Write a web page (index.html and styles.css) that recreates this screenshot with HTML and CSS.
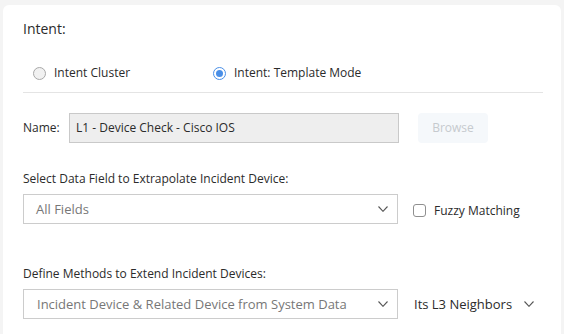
FILE: index.html
```
<!DOCTYPE html>
<html>
<head>
<meta charset="utf-8">
<link rel="stylesheet" href="styles.css">
</head>
<body>
<div class="card">
  <div class="title">Intent:</div>
  <div class="radios">
    <label class="radio-item first"><span class="radio"></span><span>Intent Cluster</span></label>
    <label class="radio-item"><span class="radio checked"></span><span>Intent: Template Mode</span></label>
  </div>
  <div class="divider"></div>
  <div class="name-row">
    <span class="name-label">Name:</span>
    <div class="name-input">L1 - Device Check - Cisco IOS</div>
    <div class="browse">Browse</div>
  </div>
  <div class="field-label first-label">Select Data Field to Extrapolate Incident Device:</div>
  <div class="select-row">
    <div class="select">
      <span class="select-text">All Fields</span>
      <svg class="chev" width="10" height="6" viewBox="0 0 10 6"><path d="M0.5 0.5 L5 5.3 L9.5 0.5" fill="none" stroke="#555" stroke-width="1.1"/></svg>
    </div>
    <label class="check-item"><span class="checkbox"></span><span>Fuzzy Matching</span></label>
  </div>
  <div class="field-label second-label">Define Methods to Extend Incident Devices:</div>
  <div class="select-row">
    <div class="select">
      <span class="select-text shifted">Incident Device &amp; Related Device from System Data</span>
      <svg class="chev" width="10" height="6" viewBox="0 0 10 6"><path d="M0.5 0.5 L5 5.3 L9.5 0.5" fill="none" stroke="#555" stroke-width="1.1"/></svg>
    </div>
    <div class="neighbors">
      <span>Its L3 Neighbors</span>
      <svg class="chev" width="10" height="6" viewBox="0 0 10 6"><path d="M0.5 0.5 L5 5.3 L9.5 0.5" fill="none" stroke="#555" stroke-width="1.1"/></svg>
    </div>
  </div>
</div>
</body>
</html>
```
FILE: styles.css
```
html, body {
  margin: 0;
  padding: 0;
  background: #f4f4f4;
  height: 334px;
  overflow: hidden;
}
body {
  font-family: "Open Sans", "Liberation Sans", sans-serif;
  color: #2b2b2b;
  font-size: 12px;
}
.card {
  margin: 5px 0 0 3px;
  width: 558px;
  height: 340px;
  box-sizing: border-box;
  background: #fff;
  border-radius: 6px;
  padding: 14px 18px 0 20px;
}
.title {
  font-size: 14px;
  line-height: 20px;
  height: 20px;
}
.radios {
  display: flex;
  align-items: center;
  height: 20px;
  margin-top: 24px;
  padding-left: 10px;
  line-height: 20px;
}
.radio-item {
  display: flex;
  align-items: center;
  gap: 8px;
}
.radio-item.first {
  width: 180px;
}
.radio {
  width: 13px;
  height: 13px;
  box-sizing: border-box;
  border-radius: 50%;
  border: 1px solid #a8a8a8;
  background: #f1f1f1;
}
.radio.checked {
  border: 1px solid #4a8fe7;
  background: #fff;
  position: relative;
}
.radio.checked::after {
  content: "";
  position: absolute;
  left: 2px;
  top: 2px;
  width: 7px;
  height: 7px;
  border-radius: 50%;
  background: #4a8fe7;
}
.divider {
  height: 1px;
  background: #e4e4e4;
  margin-top: 9px;
}
.name-row {
  display: flex;
  align-items: center;
  height: 30px;
  margin-top: 20px;
}
.name-label {
  width: 46px;
  line-height: 16px;
}
.name-input {
  width: 330px;
  height: 30px;
  box-sizing: border-box;
  background: #eeeeee;
  border: 1px solid #c9c9c9;
  padding: 0 6px;
  line-height: 28px;
}
.browse {
  margin-left: 19px;
  width: 70px;
  height: 30px;
  border-radius: 4px;
  background: #f5f8fb;
  color: #c6cace;
  text-align: center;
  line-height: 30px;
  font-size: 12px;
}
.field-label {
  line-height: 16px;
  height: 16px;
}
.first-label {
  margin-top: 28px;
}
.second-label {
  margin-top: 42px;
}
.select-row {
  display: flex;
  align-items: center;
  margin-top: 7px;
  height: 30px;
}
.select {
  width: 375px;
  height: 30px;
  box-sizing: border-box;
  border: 1px solid #cccccc;
  display: flex;
  align-items: center;
  justify-content: space-between;
  padding: 0 9px 0 12px;
  color: #777;
  font-size: 13px;
}
.select-text.shifted {
  margin-left: 1px;
}
.chev {
  display: block;
}
.check-item {
  display: flex;
  align-items: center;
  gap: 8px;
  margin-left: 15px;
  margin-top: 3px;
}
.checkbox {
  width: 13px;
  height: 13px;
  box-sizing: border-box;
  border: 1px solid #8f8f8f;
  border-radius: 3px;
  background: #fff;
}
.neighbors {
  display: flex;
  align-items: center;
  gap: 12px;
  margin-left: 16px;
  font-size: 13px;
  color: #2b2b2b;
}
```
